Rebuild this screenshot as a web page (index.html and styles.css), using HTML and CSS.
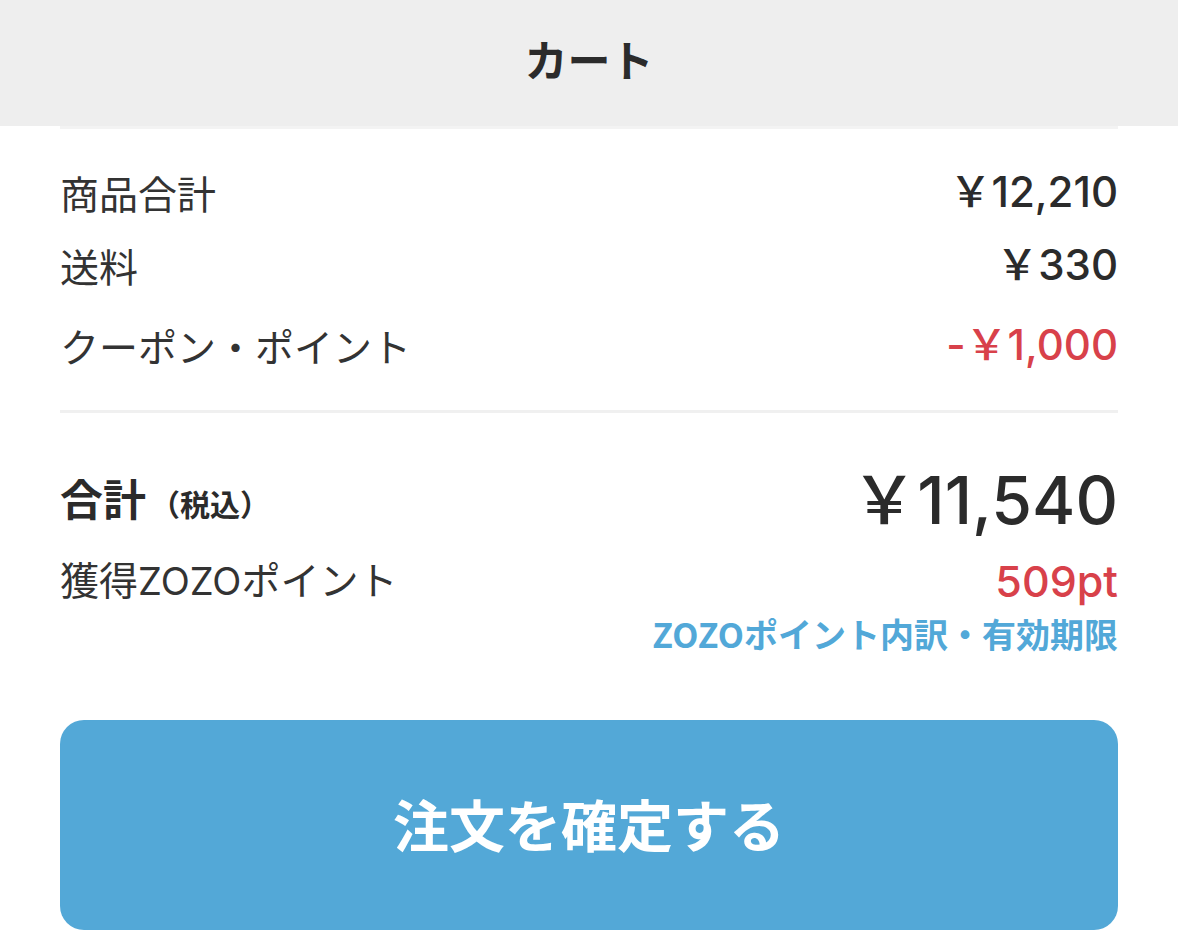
FILE: index.html
```html
<!DOCTYPE html>
<html lang="ja">
<head>
<meta charset="utf-8">
<link rel="stylesheet" href="styles.css">
</head>
<body>
<header class="header"><h1 class="title">カート</h1></header>
<div class="edge"></div>
<main class="summary">
  <div class="row row-first">
    <span class="label">商品合計</span>
    <span class="value">￥12,210</span>
  </div>
  <div class="row row-second">
    <span class="label">送料</span>
    <span class="value">￥330</span>
  </div>
  <div class="row row-third">
    <span class="label">クーポン・ポイント</span>
    <span class="value red">-￥1,000</span>
  </div>
  <hr class="divider">
  <div class="row total-row">
    <span class="total-label">合計<span class="tax">（税込）</span></span>
    <span class="total-value">￥11,540</span>
  </div>
  <div class="row points-row">
    <span class="label">獲得<span class="latin">ZOZO</span>ポイント</span>
    <span class="points">509pt</span>
  </div>
  <div class="link-row"><a class="link">ZOZOポイント内訳・有効期限</a></div>
  <button class="confirm">注文を確定する</button>
</main>
</body>
</html>
```

FILE: styles.css
```css
* { box-sizing: border-box; }
html, body { margin: 0; padding: 0; background: #ffffff; }
body {
  font-family: "Noto Sans CJK JP", "Noto Sans", sans-serif;
  color: #333333;
  width: 1178px;
  height: 939px;
  overflow: hidden;
}
.header {
  height: 126px;
  background: #eeeeee;
  display: flex;
  align-items: center;
  justify-content: center;
  padding-bottom: 10px;
}
.title {
  margin: 0;
  font-size: 43px;
  font-weight: 700;
  color: #2b2b2b;
  line-height: 1;
}
.edge {
  height: 3px;
  margin: 0 60px;
  background: #f3f3f3;
}
.summary {
  padding: 36px 60px 0 60px;
  display: flex;
  flex-direction: column;
}
.row {
  display: flex;
  justify-content: space-between;
  align-items: center;
}
.label {
  font-size: 39px;
  line-height: 54px;
  font-weight: 400;
  color: #333333;
}
.latin {
  font-family: "Inter", "Noto Sans CJK JP", sans-serif;
  font-size: 38px;
  line-height: 1;
}
.value, .points, .total-value {
  font-family: "Inter", "Noto Sans CJK JP", sans-serif;
}
.value {
  font-size: 42px;
  line-height: 54px;
  font-weight: 500;
  color: #2b2b2b;
}
.red { color: #d8414a; }
.row-second { margin-top: 19px; }
.row-third { margin-top: 26px; }
.divider {
  border: none;
  height: 3px;
  background: #f0f0f0;
  margin: 38px 0 0 0;
}
.total-row {
  margin-top: 52px;
  height: 70px;
}
.total-label {
  font-size: 43px;
  font-weight: 700;
  line-height: 70px;
  color: #2b2b2b;
}
.tax {
  font-size: 30px;
  font-weight: 700;
  margin-left: 4px;
}
.total-value {
  font-size: 66px;
  font-weight: 500;
  line-height: 70px;
  color: #2b2b2b;
}
.points-row { margin-top: 16px; }
.points {
  font-size: 43px;
  line-height: 54px;
  font-weight: 500;
  color: #d8414a;
  position: relative;
  top: 3px;
}
.link-row {
  display: flex;
  justify-content: flex-end;
  margin-top: 7px;
}
.link {
  font-size: 34px;
  line-height: 44px;
  font-weight: 700;
  color: #52a8d8;
}
.confirm {
  margin-top: 64px;
  height: 210px;
  width: 100%;
  border: none;
  border-radius: 24px;
  background: #53a8d7;
  color: #ffffff;
  font-family: "Noto Sans CJK JP", "Noto Sans", sans-serif;
  font-size: 56px;
  font-weight: 700;
  padding-bottom: 6px;
}
```
